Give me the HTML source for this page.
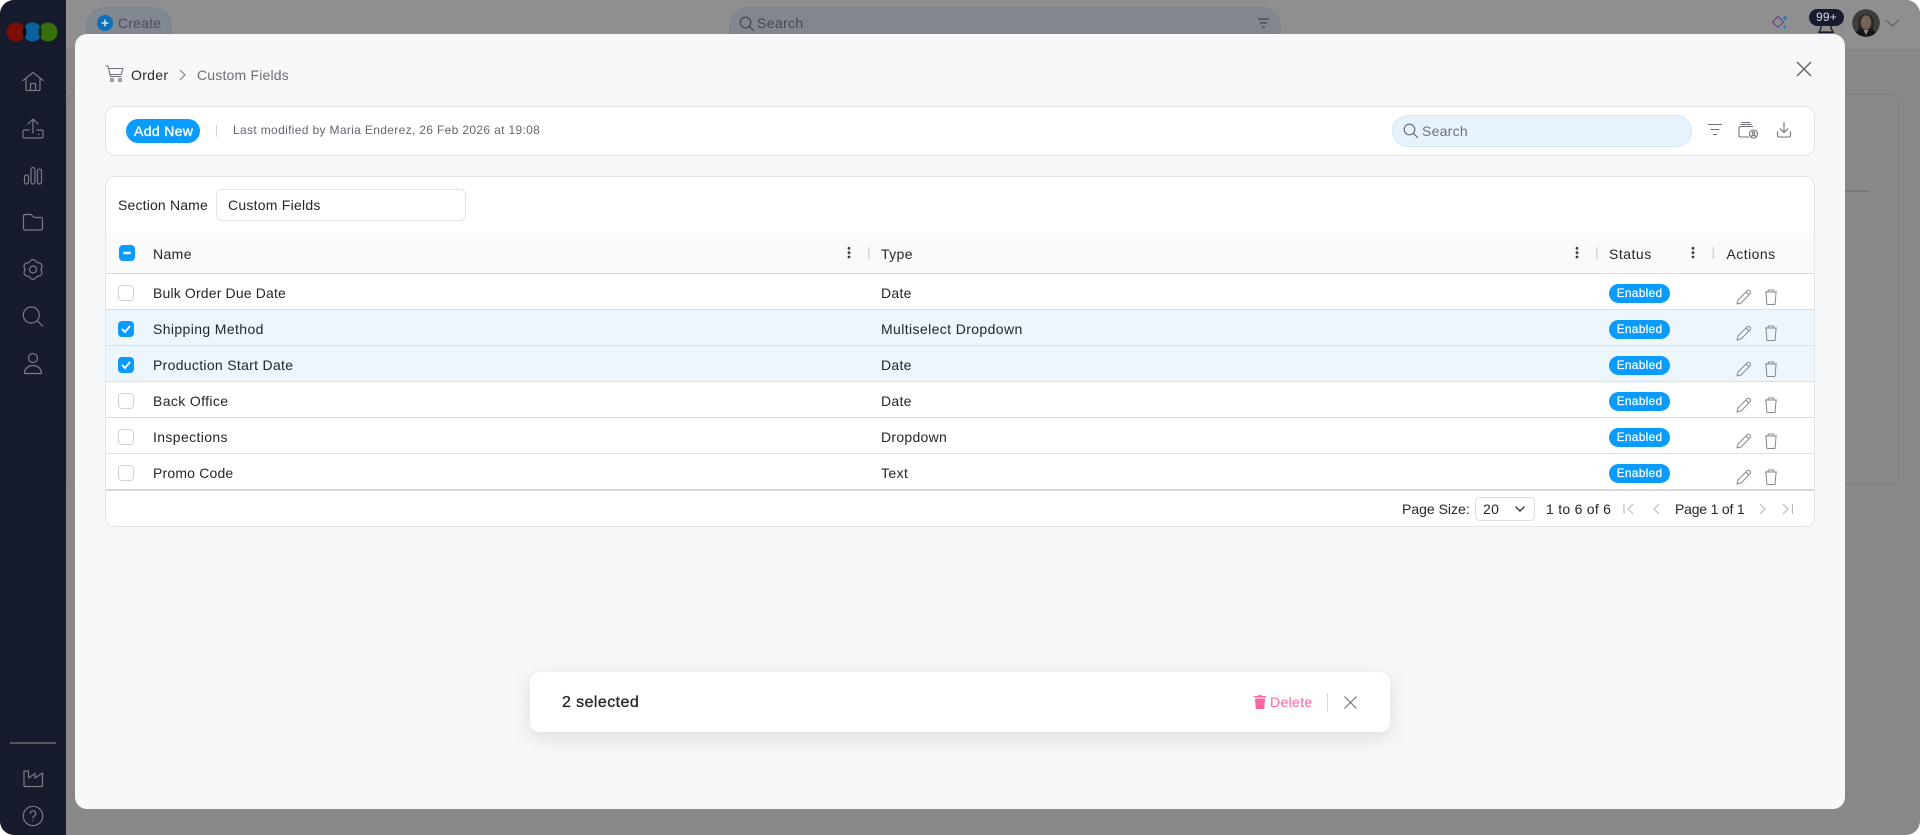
<!DOCTYPE html>
<html><head><meta charset="utf-8"><title>Custom Fields</title>
<style>
html,body{margin:0;padding:0;width:1920px;height:835px;overflow:hidden;background:#fff;}
body{font-family:"Liberation Sans",sans-serif;color:#23262b;position:relative;}
.a{position:absolute;box-sizing:border-box;}
.t{position:absolute;white-space:nowrap;line-height:20px;height:20px;font-size:14px;letter-spacing:.3px;color:#23262b;}
svg{position:absolute;overflow:visible;fill:none;}
.cb{position:absolute;left:118px;width:16px;height:16px;border:1px solid #cfd2d6;border-radius:4px;background:#fff;box-sizing:border-box;}
.cb.on{background:#0a9bff;border-color:#0a9bff;}
.rowl{position:absolute;left:106px;width:1708px;height:1px;background:#dcdfe3;}
.bd{position:absolute;left:1609px;width:61px;height:19px;border-radius:10px;background:#0a9bff;color:#fff;font-size:12px;line-height:19px;text-align:center;letter-spacing:.25px;-webkit-text-stroke:.2px #fff;}
</style></head><body>
<!-- page -->
<div class="a" style="left:0;top:0;width:1920px;height:835px;background:#888;border-radius:14px;overflow:hidden">
  <div class="a" style="left:66px;top:0;width:1854px;height:50px;background:#8f8f8f;border-bottom:1px solid #858585"></div>
  <div class="a" style="left:66px;top:94px;width:1833px;height:391px;border:1px solid #7e7e7e;border-radius:8px;background:#898989"></div>
  <div class="a" style="left:1845px;top:190px;width:24px;height:2px;background:#767676"></div>
  <div class="a" style="left:0;top:0;width:66px;height:835px;background:#171b2e"></div>
</div>
<!-- logo -->
<svg style="left:0;top:0" width="66" height="50">
  <circle cx="16" cy="32" r="9.500" fill="#7c0e05"/>
  <circle cx="32.500" cy="32" r="9.500" fill="#0a629c"/>
  <circle cx="48" cy="32" r="9.500" fill="#37700a"/>
  <path d="M24.500 26a11 11 0 0 1 0 12a11 11 0 0 1 0-12z" fill="#07070c"/>
  <path d="M40.200 26a11 11 0 0 1 0 12a11 11 0 0 1 0-12z" fill="#0a3018"/>
</svg>
<!-- sidebar icons -->
<svg style="left:0;top:0" width="66" height="835" stroke="#797b83" stroke-width="1.200" stroke-linecap="round" stroke-linejoin="round">
  <path d="M23 80.500L33 72.500L43 80.500M26 78v11.500a1 1 0 0 0 1 1h12a1 1 0 0 0 1-1V78M30.500 90.500v-7h5v7"/>
  <path d="M33 133v-14M28 124l5-5 5 5M29 130h-4.500a1.500 1.500 0 0 0-1.500 1.500v5a1.500 1.500 0 0 0 1.500 1.500h17a1.500 1.500 0 0 0 1.500-1.500v-5a1.500 1.500 0 0 0-1.500-1.500H37M38.500 134.500h.5"/>
  <rect x="24.500" y="175" width="4" height="9" rx="2"/><rect x="31" y="167.500" width="4" height="16.500" rx="2"/><rect x="37.500" y="169" width="4" height="15" rx="2"/>
  <path d="M23.500 216a1.500 1.500 0 0 1 1.500-1.500h6l3 3h7a1.500 1.500 0 0 1 1.500 1.500v9.500a1.500 1.500 0 0 1-1.500 1.500H25a1.500 1.500 0 0 1-1.500-1.500z"/>
  <circle cx="33" cy="269.500" r="3.500"/><path d="M30.200 261Q33 258.300 35.800 261Q37.200 263.400 38.960 262.830Q42.700 263.900 41.760 267.670Q40.200 269.500 41.760 271.330Q42.700 275.100 38.960 276.170Q37.200 275.600 35.800 278Q33 280.700 30.200 278Q28.800 275.600 27.040 276.170Q23.300 275.100 24.240 271.330Q25.800 269.500 24.240 267.670Q23.300 263.900 27.040 262.830Q28.800 263.400 30.200 261Z"/>
  <circle cx="31.300" cy="315" r="8"/><path d="M37 320.700L42.500 326"/>
  <circle cx="33" cy="358" r="4.500"/><path d="M24.500 373.500c0-5 4-8 8.500-8s8.500 3 8.500 8z"/>
  <path d="M24 771h4.500v7l6.500-4.500v4.500l7.500-5v12.500a1 1 0 0 1-1 1h-16.500a1 1 0 0 1-1-1z"/>
  <circle cx="33" cy="816" r="9.700"/><path d="M30.300 813.500a2.700 2.700 0 1 1 4.200 2.300c-1 .6-1.500 1.100-1.500 2.200M33 820.500v.1"/>
</svg>
<div class="a" style="left:10px;top:742px;width:46px;height:2px;background:#56585f"></div>

<!-- top bar -->
<div class="a" style="left:86px;top:7px;width:86px;height:40px;border-radius:20px;background:#828892;border:1px solid #7c838e"></div>
<svg style="left:97px;top:15px" width="16" height="16"><circle cx="8" cy="8" r="8" fill="#0a70b5"/><path d="M8 4.500v7M4.500 8h7" stroke="#cfe4f3" stroke-width="1.500"/></svg>
<div class="t" style="left:118px;top:13px;color:#4a4e55;letter-spacing:.2px">Create</div>
<div class="a" style="left:729px;top:7px;width:552px;height:40px;border-radius:20px;background:#82868e;border:1px solid #7c838e"></div>
<svg style="left:739px;top:16px" width="16" height="16" stroke="#3f434a" stroke-width="1.200"><circle cx="6.500" cy="6.500" r="5.300"/><path d="M10.500 10.500L15 15"/></svg>
<div class="t" style="left:757px;top:13px;color:#44484f;letter-spacing:.35px">Search</div>
<svg style="left:1257px;top:17px" width="14" height="14" stroke="#3f434a" stroke-width="1.200"><path d="M1 2h11M3 6h7M5 10h3"/></svg>
<svg style="left:1770px;top:14px" width="20" height="20"><path d="M8 2.500L13.500 8L8 13.500L2.500 8z" stroke="#6d3a98" stroke-width="1.100"/><path d="M15 2v4.500M12.800 4.200h4.400" stroke="#1668a8"/><path d="M14.500 11v4M12.500 13h4" stroke="#2a7fa8"/></svg>
<svg style="left:1815px;top:20px" width="24" height="16" stroke="#171b2e" stroke-width="1.300"><path d="M6 4v4l-2 4h14l-2-4V4"/><path d="M3.500 12.500h15"/></svg>
<div class="a" style="left:1809px;top:9px;width:35px;height:17px;border-radius:9px;background:#171b2e;color:#d9dade;font-size:12px;line-height:17px;text-align:center;letter-spacing:.2px">99+</div>
<svg style="left:1852px;top:9px" width="28" height="28"><defs><clipPath id="av"><circle cx="14" cy="14" r="13.800"/></clipPath></defs><g clip-path="url(#av)"><rect width="28" height="28" fill="#3d3d3b"/><path d="M6.500 12C6.500 3 21.500 3 21.500 12V23H6.500z" fill="#2a2421"/><ellipse cx="14" cy="13.500" rx="5.300" ry="7.300" fill="#72625a"/><path d="M1 28c1-5 6-7 9.500-8l3.500 3.500 3.500-3.500c4 1 8 3 9.500 8z" fill="#141416"/><path d="M11.500 21l2.500 5 2.500-5z" fill="#8f8a85"/></g></svg>
<svg style="left:1885px;top:18px" width="16" height="10" stroke="#62646a" stroke-width="1.200"><path d="M1 2l6.500 6L14 2"/></svg>

<!-- modal -->
<div class="a" style="left:75px;top:34px;width:1770px;height:775px;background:#f7f8fa;border-radius:12px"></div>
<svg style="left:105px;top:65px" width="20" height="18" stroke="#6f7278" stroke-width="1.100" stroke-linejoin="round"><path d="M.5 1h2.500l2.500 10.500h11"/><path d="M3.500 3.500H18l-1.800 6H5"/><circle cx="7" cy="15" r="1.400"/><circle cx="15" cy="15" r="1.400"/></svg>
<div class="t" style="left:131px;top:65px;color:#26292e;letter-spacing:.3px">Order</div>
<svg style="left:178px;top:69px" width="10" height="12" stroke="#7a7d83" stroke-width="1.100"><path d="M2 1l5 5-5 5"/></svg>
<div class="t" style="left:197px;top:65px;color:#6b6f76;letter-spacing:.19px">Custom Fields</div>
<svg style="left:1796px;top:61px" width="16" height="16" stroke="#5f6268" stroke-width="1.400"><path d="M1 1l14 14M15 1L1 15"/></svg>

<!-- toolbar -->
<div class="a" style="left:105px;top:106px;width:1710px;height:50px;background:#fff;border:1px solid #e2e4e8;border-radius:10px"></div>
<div class="a" style="left:126px;top:119px;width:74px;height:24px;border-radius:12px;background:#0a9bff"></div>
<div class="t" style="left:134px;top:121px;color:#fff;letter-spacing:.35px;-webkit-text-stroke:.35px #fff">Add New</div>
<div class="a" style="left:216px;top:125px;width:1px;height:12px;background:#cfd2d6"></div>
<div class="t" style="left:233px;top:120px;font-size:12px;color:#63676e;letter-spacing:.34px">Last modified by Maria Enderez, 26 Feb 2026 at 19:08</div>
<div class="a" style="left:1392px;top:115px;width:300px;height:32px;border-radius:16px;background:#e7f2fd;border:1px solid #d4e6f8"></div>
<svg style="left:1403px;top:123px" width="16" height="16" stroke="#666a70" stroke-width="1.200"><circle cx="6.500" cy="6.500" r="5.300"/><path d="M10.500 10.500L15 15"/></svg>
<div class="t" style="left:1422px;top:121px;color:#6f737a;letter-spacing:.25px">Search</div>
<svg style="left:1707px;top:122px" width="16" height="16" stroke="#6f7278" stroke-width="1.100"><path d="M1 2.500h14M3.500 7.500h9M6 12.500h4"/></svg>
<svg style="left:1738px;top:121px" width="22" height="18" stroke="#6f7278" stroke-width="1.100"><path d="M3.500 1.500h9M2.500 3.500h11"/><path d="M15 5.500H2.500A1.500 1.500 0 0 0 1 7v7.500A1.500 1.500 0 0 0 2.500 16H11"/><circle cx="15.500" cy="13" r="4"/><circle cx="15.500" cy="12" r="1.200"/><path d="M13 15.500c.5-1.200 4.500-1.200 5 0"/></svg>
<svg style="left:1776px;top:121px" width="16" height="18" stroke="#6f7278" stroke-width="1.100"><path d="M8 1v10M4 7.500L8 11.500L12 7.500"/><path d="M1.500 10.500v4a1.500 1.500 0 0 0 1.500 1.500h10a1.500 1.500 0 0 0 1.500-1.500v-4"/></svg>

<!-- table card -->
<div class="a" style="left:105px;top:176px;width:1710px;height:351px;background:#fff;border:1px solid #e2e4e8;border-radius:10px"></div>
<div class="t" style="left:118px;top:195px;letter-spacing:.17px">Section Name</div>
<div class="a" style="left:216px;top:189px;width:250px;height:32px;border:1px solid #e2e4e8;border-radius:6px;background:#fff"></div>
<div class="t" style="left:228px;top:195px;letter-spacing:.24px">Custom Fields</div>

<div class="a" style="left:106px;top:233px;width:1708px;height:40px;background:#fafafa"></div>
<div class="rowl" style="top:273px;background:#dadde1"></div>
<div class="a" style="left:106px;top:310px;width:1708px;height:35px;background:#edf5fd"></div>
<div class="a" style="left:106px;top:346px;width:1708px;height:35px;background:#edf5fd"></div>
<div class="rowl" style="top:309px"></div><div class="rowl" style="top:345px"></div><div class="rowl" style="top:381px"></div><div class="rowl" style="top:417px"></div><div class="rowl" style="top:453px"></div>
<div class="rowl" style="top:489px;height:2px;background:#d6d9dd"></div>

<div class="cb on" style="left:119px;top:245px"></div>
<svg style="left:119px;top:245px" width="16" height="16"><path d="M4.300 8h7.400" stroke="#fff" stroke-width="2.400"/></svg>
<div class="t" style="left:153px;top:244px;letter-spacing:.38px">Name</div>
<div class="t" style="left:881px;top:244px;letter-spacing:.38px">Type</div>
<div class="t" style="left:1609px;top:244px;letter-spacing:.5px">Status</div>
<div class="t" style="left:1726.500px;top:244px;letter-spacing:.45px">Actions</div>
<svg style="left:0;top:0" width="1920" height="300"><g fill="#3a3d43"><circle cx="849" cy="248.300" r="1.400"/><circle cx="849" cy="252.700" r="1.400"/><circle cx="849" cy="257" r="1.400"/><circle cx="1577" cy="248.300" r="1.400"/><circle cx="1577" cy="252.700" r="1.400"/><circle cx="1577" cy="257" r="1.400"/><circle cx="1693" cy="248.300" r="1.400"/><circle cx="1693" cy="252.700" r="1.400"/><circle cx="1693" cy="257" r="1.400"/></g><g fill="#d4d6da"><rect x="868" y="247" width="1.500" height="12"/><rect x="1596" y="247" width="1.500" height="12"/><rect x="1712.500" y="247" width="1.500" height="12"/></g></svg>

<!-- rows -->
<div class="cb" style="top:285px"></div><div class="cb on" style="top:321px"></div><div class="cb on" style="top:357px"></div><div class="cb" style="top:393px"></div><div class="cb" style="top:429px"></div><div class="cb" style="top:465px"></div>
<svg style="left:118px;top:321px" width="16" height="16"><path d="M4 8l3 3 5-6" stroke="#fff" stroke-width="1.800"/></svg>
<svg style="left:118px;top:357px" width="16" height="16"><path d="M4 8l3 3 5-6" stroke="#fff" stroke-width="1.800"/></svg>

<div class="t" style="left:153px;top:283px;letter-spacing:.16px">Bulk Order Due Date</div><div class="t" style="left:881px;top:283px">Date</div>
<div class="t" style="left:153px;top:319px;letter-spacing:.38px">Shipping Method</div><div class="t" style="left:881px;top:319px;letter-spacing:.39px">Multiselect Dropdown</div>
<div class="t" style="left:153px;top:355px;letter-spacing:.31px">Production Start Date</div><div class="t" style="left:881px;top:355px">Date</div>
<div class="t" style="left:153px;top:391px;letter-spacing:.37px">Back Office</div><div class="t" style="left:881px;top:391px">Date</div>
<div class="t" style="left:153px;top:427px;letter-spacing:.37px">Inspections</div><div class="t" style="left:881px;top:427px;letter-spacing:.28px">Dropdown</div>
<div class="t" style="left:153px;top:463px;letter-spacing:.18px">Promo Code</div><div class="t" style="left:881px;top:463px;letter-spacing:.42px">Text</div>

<div class="bd" style="top:284px">Enabled</div><div class="bd" style="top:320px">Enabled</div><div class="bd" style="top:356px">Enabled</div><div class="bd" style="top:392px">Enabled</div><div class="bd" style="top:428px">Enabled</div><div class="bd" style="top:464px">Enabled</div>

<svg width="0" height="0"><defs>
<g id="acts" stroke="#85888e" stroke-width="1" stroke-linejoin="round"><path d="M1 15l1-4L11 2c1-1 2.200-1 3 0s.8 2 0 2.800L5 14z"/><path d="M10 3l3 3"/><path d="M29 3h12M32 3V2a1 1 0 0 1 1-1h4a1 1 0 0 1 1 1v1M30 3.500l.8 11a1.200 1.200 0 0 0 1.200 1h6a1.200 1.200 0 0 0 1.200-1l.8-11"/></g>
</defs></svg>
<svg style="left:1736px;top:289px" width="44" height="18"><use href="#acts"/></svg>
<svg style="left:1736px;top:325px" width="44" height="18"><use href="#acts"/></svg>
<svg style="left:1736px;top:361px" width="44" height="18"><use href="#acts"/></svg>
<svg style="left:1736px;top:397px" width="44" height="18"><use href="#acts"/></svg>
<svg style="left:1736px;top:433px" width="44" height="18"><use href="#acts"/></svg>
<svg style="left:1736px;top:469px" width="44" height="18"><use href="#acts"/></svg>

<!-- pagination -->
<div class="t" style="left:1402px;top:499px;letter-spacing:0">Page Size:</div>
<div class="a" style="left:1475px;top:497px;width:60px;height:24px;border:1px solid #dadde1;border-radius:5px;background:#fff"></div>
<div class="t" style="left:1483px;top:499px;letter-spacing:.4px">20</div>
<svg style="left:1514px;top:505px" width="12" height="8" stroke="#33363b" stroke-width="1.400"><path d="M1.500 1.500L6 6l4.500-4.500"/></svg>
<div class="t" style="left:1546px;top:499px;letter-spacing:.27px">1 to 6 of 6</div>
<svg style="left:1622px;top:503px" width="172" height="12" stroke="#b7babf" stroke-width="1.100"><path d="M2 1v10M11 1L6 6l5 5"/><path d="M37 1L32 6l5 5"/><path d="M138 1l5 5-5 5"/><path d="M161 1l5 5-5 5M170.500 1v10"/></svg>
<div class="t" style="left:1675px;top:499px;letter-spacing:-.2px">Page 1 of 1</div>

<!-- toast -->
<div class="a" style="left:530px;top:672px;width:860px;height:60px;background:#fff;border-radius:10px;box-shadow:0 6px 20px rgba(30,35,50,.13)"></div>
<div class="t" style="left:562px;top:693px;font-size:16px;letter-spacing:.42px;-webkit-text-stroke:.3px #23262b">2 selected</div>
<svg style="left:1254px;top:695px" width="12" height="14"><path d="M4.500 0h3l.5 1h4v1.500H0V1h4zM1 3.500h10l-.7 9.500a1 1 0 0 1-1 1H2.700a1 1 0 0 1-1-1z" fill="#ff63a5"/></svg>
<div class="t" style="left:1270px;top:692px;color:#ff63a5;letter-spacing:.35px">Delete</div>
<div class="a" style="left:1327px;top:693px;width:1px;height:19px;background:#d8dade"></div>
<svg style="left:1344px;top:696px" width="13" height="13" stroke="#6f7278" stroke-width="1.200"><path d="M.5.500l12 12M12.500.500l-12 12"/></svg>
</body></html>
